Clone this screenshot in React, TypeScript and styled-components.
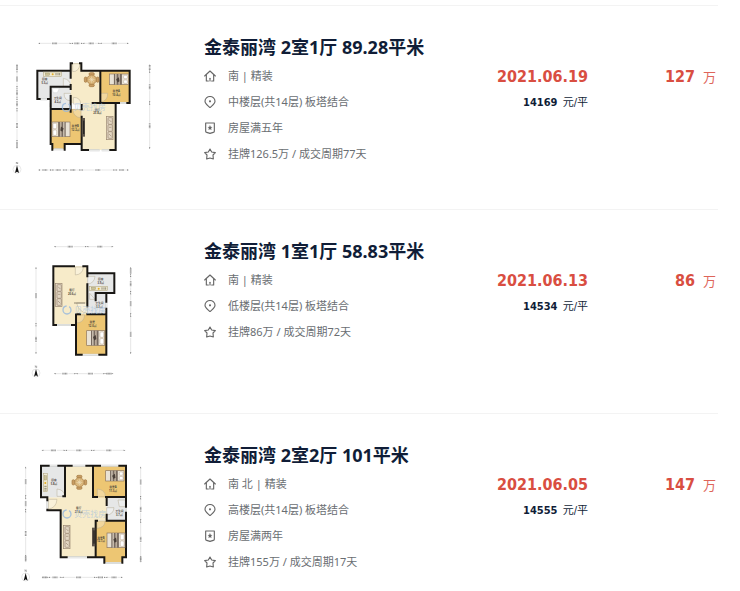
import React from "react";
import styled, { createGlobalStyle } from "styled-components";

const GlobalStyle = createGlobalStyle`
  body {
    margin: 0;
    background: #fff;
    font-family: "Noto Sans", "Noto Sans CJK SC", sans-serif;
  }
`;

const List = styled.ul`
  list-style: none;
  margin: 0 22px 0 0;
  padding: 5px 0 0;
`;

const Item = styled.li`
  display: flex;
  align-items: flex-start;
  box-sizing: border-box;
  min-height: 204px;
  padding-top: 24px;
  border-top: 1px solid #f3f3f3;
`;

const PlanLink = styled.a`
  flex: none;
  width: 170px;
  margin-right: 34px;
`;

const PlanSvg = styled.svg`
  display: block;
  width: 100%;
  height: auto;
`;

const Info = styled.div`
  flex: 1;
  min-width: 0;
  padding-top: 3px;
`;

const Title = styled.h2`
  margin: 0 0 6px;
  font-size: 18px;
  line-height: 28px;
  font-weight: 700;
  white-space: nowrap;
`;

const TitleLink = styled.a`
  color: #101d37;
  text-decoration: none;
`;

const Details = styled.ul`
  list-style: none;
  margin: 0;
  padding: 0;
  display: grid;
  row-gap: 8px;
`;

const Detail = styled.li`
  display: flex;
  align-items: center;
  gap: 12px;
  font-size: 11px;
  line-height: 18px;
  color: #6a6e72;
  white-space: nowrap;
`;

const IconSvg = styled.svg`
  flex: none;
  width: 12px;
  height: 12px;
  fill: none;
  stroke: #666;
  stroke-width: 3.4;
  stroke-linejoin: round;
  stroke-linecap: round;
`;

const Deal = styled.div`
  flex: none;
  width: 120px;
  padding-top: 35px;
  text-align: right;
`;

const Total = styled(Deal)`
  width: 130px;
  padding-right: 2px;
  box-sizing: border-box;
`;

const Strong = styled.span`
  display: block;
  font-family: "DejaVu Sans Condensed", "Noto Sans CJK SC", sans-serif;
  font-size: 16px;
  line-height: 24px;
  font-weight: 700;
  color: #d94e41;
`;

const Wan = styled.span`
  margin-left: 8px;
  font-size: 13px;
  font-weight: 400;
  color: #de655a;
`;

const UnitPrice = styled.span`
  display: block;
  margin-top: 4px;
  font-family: "DejaVu Sans Condensed", "Noto Sans CJK SC", sans-serif;
  font-size: 11px;
  line-height: 20px;
  color: #101d37;
`;

type IconName = "home" | "pin" | "badge" | "star";

const icons: Record<IconName, React.ReactNode> = {
  home: (
    <>
      <path d="M2 18 L18 3 L34 18" />
      <path d="M7 15 V33 H13 M23 33 H29 V15" />
      <path d="M18 25 V33" />
    </>
  ),
  pin: (
    <>
      <path d="M18 35 C12 29 3 23 3 15.500 A15 14 0 0 1 33 15.500 C33 23 24 29 18 35 Z" />
      <circle cx="18" cy="16" r="1.500" />
    </>
  ),
  badge: (
    <>
      <path d="M5 3 H31 V28 Q31 31 28 31 L18 34 L8 31 Q5 31 5 28 Z" />
      <path d="M18 11 L20 15 L24 16 L21 19 L22 23 L18 21 L14 23 L15 19 L12 16 L16 15 Z" fill="#666" strokeWidth="1" />
    </>
  ),
  star: <path d="M18 3 L23 12 L34 14 L27 21 L28 33 L18 30 L8 33 L9 21 L2 14 L13 12 Z" />,
};

const Icon = ({ name }: { name: IconName }) => (
  <IconSvg viewBox="0 0 36 36" aria-hidden="true">
    {icons[name]}
  </IconSvg>
);

const TAN = "#f7ebc9";
const WOOD = "#edc673";
const GREY = "#e6e7e7";
const WALL = "#191714";

const Walls = ({ d }: { d: string }) => (
  <path d={d} fill="none" stroke={WALL} strokeWidth="6" strokeLinecap="square" />
);

const Openings = ({ d }: { d: string }) => (
  <>
    <path d={d} fill="none" stroke="#c9ccca" strokeWidth="6" />
    <path d={d} fill="none" stroke="#fff" strokeWidth="2" />
  </>
);

const Doors = ({ d }: { d: string }) => (
  <path d={d} fill="#fff" fillOpacity="0.300" stroke="#b6ad95" strokeWidth="1.500" />
);

const Ruler = ({ at, marks, vertical }: { at: number; marks: number[]; vertical?: boolean }) => (
  <g transform={vertical ? `translate(${at} 0) rotate(90)` : `translate(0 ${at})`}>
    {marks.slice(1).map((end, i) => {
      const start = marks[i];
      const mid = (start + end) / 2;
      return (
        <g key={end}>
          <path
            d={`M${start} 0 H${mid - 10} M${mid + 10} 0 H${end}`}
            stroke="#cfcfcf"
            strokeWidth="1.500"
          />
          <path
            d={`M${start} 0 l5 -2 v4 z M${end} 0 l-5 -2 v4 z`}
            fill="#777"
          />
          <path d={`M${mid - 8} 0 H${mid + 8}`} stroke="#999" strokeWidth="5" strokeDasharray="3 1" />
        </g>
      );
    })}
  </g>
);

const Compass = ({ x, y }: { x: number; y: number }) => (
  <g transform={`translate(${x} ${y})`}>
    <circle r="12" fill="none" stroke="#d0d0d0" strokeWidth="1.500" />
    <path d="M0 -12 L6 11 L0 7 L-6 11 Z" fill="#111" />
    <path d="M-2 -16 V-22 L2 -16 V-22" fill="none" stroke="#777" strokeWidth="1.500" />
  </g>
);

const Bed = ({ x, y, flip, w = 54, h = 44 }: { x: number; y: number; flip?: boolean; w?: number; h?: number }) => (
  <g transform={flip ? `translate(${x + w} ${y}) scale(-1 1)` : `translate(${x} ${y})`}>
    <rect width={w} height={h} fill="#e9e2d5" stroke="#8b7560" strokeWidth="2" />
    <rect x={w * 0.34} width={w * 0.42} height={h} fill="#776a60" />
    <rect x={w * 0.44} width="5" height={h} fill="#bcae9d" />
    <rect x={w * 0.62} width="4" height={h} fill="#d5cbbb" />
    <rect x="3" y="4" width="11" height={h / 2 - 6} rx="3" fill="#fff" stroke="#a1866b" />
    <rect x="3" y={h / 2 + 2} width="11" height={h / 2 - 6} rx="3" fill="#fff" stroke="#a1866b" />
    <path d={`M${w * 0.5} ${h * 0.3} l8 6 l-4 10 l-6 -4 z`} fill="#493f38" />
  </g>
);

const Sofa = ({ x, y }: { x: number; y: number }) => (
  <g transform={`translate(${x} ${y})`} fill="#e2d6c3" stroke="#9a866f" strokeWidth="2">
    <rect width="20" height="70" />
    <rect x="5" y="4" width="13" height="20" rx="3" />
    <rect x="5" y="25" width="13" height="20" rx="3" />
    <rect x="5" y="46" width="13" height="20" rx="3" />
    <path d="M8 10 l7 7 M8 53 l7 7 M8 33 h7" />
  </g>
);

const Table = ({ x, y }: { x: number; y: number }) => (
  <g transform={`translate(${x} ${y})`} stroke="#a57a44" strokeWidth="2">
    <g fill="#c79c62">
      <rect x="-8" y="-21" width="16" height="8" rx="4" />
      <rect x="-8" y="13" width="16" height="8" rx="4" />
      <rect x="-22" y="-8" width="8" height="16" rx="4" />
      <rect x="14" y="-8" width="8" height="16" rx="4" />
    </g>
    <circle r="14" fill="#d8b478" />
    <path d="M-9 0 H9 M0 -9 V9 M-6 -6 L6 6 M-6 6 L6 -6" stroke="#efe0bb" />
  </g>
);

const Cabinet = ({ x, y, h = 56 }: { x: number; y: number; h?: number }) => (
  <g transform={`translate(${x} ${y})`}>
    <rect width="10" height={h} fill="#5c534a" />
    <rect x="4" y="8" width="4" height={h - 16} fill="#282522" />
  </g>
);

const Counter = ({ x, y, vertical }: { x: number; y: number; vertical?: boolean }) => (
  <g transform={`translate(${x} ${y})${vertical ? " rotate(90)" : ""}`}>
    <rect width="54" height="13" fill="#eee8d2" stroke="#aca076" strokeWidth="1.500" />
    <rect x="6" y="3" width="13" height="7" fill="#ccc294" stroke="#8f8866" />
    <circle cx="28" cy="7" r="3" fill="#e3ac24" />
    <path d="M38 3 v7 M44 3 v7 M49 3 v7" stroke="#66604c" strokeWidth="2" />
  </g>
);

const Label = styled.text`
  font-size: 8px;
  font-weight: 700;
  fill: #4c463b;
  text-anchor: middle;
`;

const Watermark = styled.text`
  font-size: 24px;
  fill: #a9c3dd;
  fill-opacity: 0.7;
`;

const Room = ({ x, y, name, area }: { x: number; y: number; name: string; area: string }) => (
  <>
    <Label x={x} y={y - 1}>{name}</Label>
    <Label x={x} y={y + 10}>{area}</Label>
  </>
);

const Brand = ({ x, y }: { x: number; y: number }) => (
  <>
    <circle cx={x} cy={y} r="12" fill="none" stroke="#94b6df" strokeOpacity="0.800" strokeWidth="4" strokeDasharray="54 8" />
    <Watermark x={x + 22} y={y + 9}>贝壳找房</Watermark>
  </>
);

const PlanA = () => (
  <PlanSvg viewBox="0 0 510 450" role="img" aria-label="户型图">
    <path d="M112 122 H212 V170 H152 V207 H112 Z" fill={GREY} />
    <rect x="153" y="170" width="59" height="66" fill={GREY} />
    <path d="M212 100 H244 V122 H301 V219 H347 V360 H245 V219 H212 Z" fill={TAN} />
    <rect x="301" y="122" width="88" height="97" fill={WOOD} />
    <path d="M152 237 H244 V342 H194 V358 H157 V342 H152 Z" fill={WOOD} />
    <Doors d="M218 101 v24 q20 0 22 -24 z M190 145 v24 h22 q0 -20 -22 -24 z M212 190 h-20 q0 22 20 22 z M220 222 v-20 q22 0 22 20 z M301 190 h22 q0 25 -22 25 z M218 238 h25 v25 q-22 0 -25 -25 z" />
    <Openings d="M121 208 H142 M357 219 H380 M267 361 H299 M305 361 H329 M162 358 H189 M152 220 V231" />
    <Walls d="M210 122 H112 V207 H119 M144 207 H152 V170 H212 M212 122 V143 M212 165 V177 M212 198 V245 M152 170 V239 M212 125 V100 H216 M240 100 H244 V122 H389 V219 H382 M357 219 H301 V122 M301 219 H278 M347 219 V360 H331 M245 360 V260 M245 360 H264 M245 225 V238 M212 237 H152 V342 H157 V359 M194 359 V342 H244 M347 223 V219 H355" />
    <Counter x={130} y={126} />
    <Table x={275} y={149} />
    <Bed x={328} y={132} w={57} h={32} flip />
    <Bed x={156} y={276} />
    <Cabinet x={245} y={264} />
    <Sofa x={319} y={259} />
    <path d="M156 175 h22 l-6 13 h-12 z" fill="#fff" stroke="#b9bec0" />
    <Room x={134} y={151} name="厨房" area="5.3㎡" />
    <Room x={173} y={208} name="卫生间" area="4.2㎡" />
    <Room x={349} y={187} name="卧室A" area="10.4㎡" />
    <Room x={292} y={243} name="客厅" area="23.8㎡" />
    <Room x={226} y={293} name="卧室B" area="12.2㎡" />
    <Brand x={199} y={232} />
    <Ruler at={40} marks={[115, 214, 248, 300, 386]} />
    <Ruler at={420} marks={[115, 155, 195, 243, 345, 386]} />
    <Ruler vertical at={51} marks={[103, 122, 173, 205, 239, 335, 356]} />
    <Ruler vertical at={449} marks={[103, 123, 219, 357]} />
    <Compass x={51} y={418} />
  </PlanSvg>
);

const PlanB = () => (
  <PlanSvg viewBox="0 -3 510 450" role="img" aria-label="户型图">
    <path d="M160 94 H262 V238 H228 V270 H160 Z" fill={TAN} />
    <rect x="262" y="115" width="81" height="58" fill={GREY} />
    <rect x="262" y="174" width="57" height="64" fill={GREY} />
    <rect x="228" y="238" width="91" height="121" fill={WOOD} />
    <Doors d="M226 96 v24 q23 -2 24 -24 z M263 124 h22 q-2 21 -22 23 z M230 204 h32 v31 q-26 -4 -32 -31 z M230 240 h24 q-2 23 -24 24 z M269 175 v18 h16 z" />
    <Openings d="M171 270 H213 M248 359 H295 M319 203 V218" />
    <Walls d="M222 94 H160 V270 H168 M216 270 H228 V359 H245 M298 359 H319 V221 M319 200 V174 H287 V196 M250 94 H262 V124 M262 115 H343 V174 H319 M262 148 V214 M228 238 H240 M262 238 H319 M228 238 V270" />
    <path d="M222 204 H255" stroke="#5c5142" strokeWidth="2" />
    <Sofa x={166} y={145} />
    <Counter x={268} y={154} />
    <Bed x={260} y={287} flip />
    <Room x={216} y={169} name="客厅" area="20.6㎡" />
    <Room x={302} y={137} name="厨房" area="3.9㎡" />
    <Room x={298} y={208} name="卫生间" area="3.3㎡" />
    <Room x={277} y={265} name="卧室" area="12.0㎡" />
    <Brand x={201} y={225} />
    <Ruler at={35} marks={[162, 260, 340]} />
    <Ruler at={416} marks={[162, 228, 315, 340]} />
    <Ruler vertical at={108} marks={[96, 269, 357]} />
    <Ruler vertical at={392} marks={[96, 121, 173, 240, 357]} />
    <Compass x={108} y={414} />
  </PlanSvg>
);

const PlanC = () => (
  <PlanSvg viewBox="0 -6 510 450" role="img" aria-label="户型图">
    <path d="M195 77 H279 V171 H320 V242 H287 V352 H182 V211 H142 V172 H195 Z" fill={TAN} />
    <rect x="123" y="77" width="72" height="95" fill={GREY} />
    <rect x="279" y="77" width="99" height="95" fill={WOOD} />
    <rect x="320" y="172" width="58" height="70" fill={GREY} />
    <path d="M287 243 H378 V352 H367 V368 H313 V352 H287 Z" fill={WOOD} />
    <Doors d="M145 178 h26 q-2 26 -26 29 z M171 169 v-22 q22 2 23 22 z M292 170 v-23 q24 2 24 23 z M320 203 h22 q-2 21 -22 22 z M291 243 v22 q24 -2 24 -22 z M354 180 h22 v20 h-18 z" />
    <Openings d="M149 77 H172 M218 77 H256 M303 77 H355 M203 352 H261 M317 369 H363 M378 203 V215 M142 184 V206" />
    <Walls d="M146 77 H123 V172 H142 V181 M142 209 V211 H182 V352 H200 M264 352 H313 V368 M175 77 H215 M259 77 H300 M358 77 H378 V200 M378 218 V352 H367 V368 M195 77 V169 H190 M279 77 V171 H291 M318 171 H378 M320 171 V195 M320 224 V242 H378 M287 242 V352 M287 242 H291" />
    <Counter x={143} y={101} vertical />
    <Table x={238} y={127} />
    <Bed x={317} y={92} w={55} h={31} flip />
    <Bed x={321} y={279} flip />
    <Sofa x={190} y={256} />
    <Cabinet x={276} y={263} />
    <Room x={162} y={124} name="厨房" area="5.8㎡" />
    <Room x={339} y={146} name="卧室A" area="11.3㎡" />
    <Room x={236} y={209} name="客厅" area="27.6㎡" />
    <Room x={358} y={217} name="卫生间" area="3.7㎡" />
    <Room x={303} y={297} name="卧室B" area="12.7㎡" />
    <Brand x={201} y={222} />
    <Ruler at={31} marks={[125, 196, 278, 376]} />
    <Ruler at={412} marks={[125, 145, 186, 287, 317, 368]} />
    <Ruler vertical at={77} marks={[80, 171, 212, 350, 363]} />
    <Ruler vertical at={422} marks={[80, 173, 243, 353, 363]} />
    <Compass x={77} y={411} />
  </PlanSvg>
);

interface Listing {
  title: string;
  Plan: React.ComponentType;
  details: [IconName, string][];
  date: string;
  unit: string;
  total: string;
}

const listings: Listing[] = [
  {
    title: "金泰丽湾 2室1厅 89.28平米",
    Plan: PlanA,
    details: [
      ["home", "南 | 精装"],
      ["pin", "中楼层(共14层) 板塔结合"],
      ["badge", "房屋满五年"],
      ["star", "挂牌126.5万 / 成交周期77天"],
    ],
    date: "2021.06.19",
    unit: "14169",
    total: "127",
  },
  {
    title: "金泰丽湾 1室1厅 58.83平米",
    Plan: PlanB,
    details: [
      ["home", "南 | 精装"],
      ["pin", "低楼层(共14层) 板塔结合"],
      ["star", "挂牌86万 / 成交周期72天"],
    ],
    date: "2021.06.13",
    unit: "14534",
    total: "86",
  },
  {
    title: "金泰丽湾 2室2厅 101平米",
    Plan: PlanC,
    details: [
      ["home", "南 北 | 精装"],
      ["pin", "高楼层(共14层) 板塔结合"],
      ["badge", "房屋满两年"],
      ["star", "挂牌155万 / 成交周期17天"],
    ],
    date: "2021.06.05",
    unit: "14555",
    total: "147",
  },
];

const UnitValue = styled.b`
  margin-right: 2px;
  font-weight: 700;
`;

export default function App() {
  return (
    <>
      <GlobalStyle />
      <List>
        {listings.map(({ title, Plan, details, date, unit, total }) => (
          <Item key={title}>
            <PlanLink href="#">
              <Plan />
            </PlanLink>
            <Info>
              <Title>
                <TitleLink href="#">{title}</TitleLink>
              </Title>
              <Details>
                {details.map(([icon, text]) => (
                  <Detail key={icon}>
                    <Icon name={icon} />
                    {text}
                  </Detail>
                ))}
              </Details>
            </Info>
            <Deal>
              <Strong>{date}</Strong>
              <UnitPrice>
                <UnitValue>{unit}</UnitValue> 元/平
              </UnitPrice>
            </Deal>
            <Total>
              <Strong>
                {total}
                <Wan>万</Wan>
              </Strong>
            </Total>
          </Item>
        ))}
      </List>
    </>
  );
}
